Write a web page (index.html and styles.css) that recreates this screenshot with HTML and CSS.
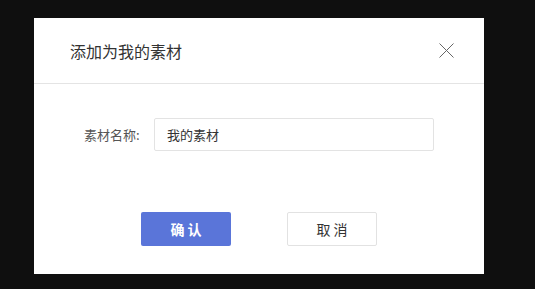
FILE: index.html
```html
<!DOCTYPE html>
<html>
<head>
<title>添加为我的素材</title>
<meta charset="utf-8"/>
<link rel="stylesheet" href="styles.css">
</head>
<body>
<div class="dialog">
<div class="dialog-head">
<div class="title">添加为我的素材</div>
<div class="close" title="关闭">
<svg width="15" height="15" viewBox="0 0 15 15"><path d="M0.5 0.5L14.5 14.5M14.5 0.5L0.5 14.5" stroke="#666" stroke-width="1" fill="none"/></svg>
</div>
</div>
<div class="dialog-body">
<label class="field">
<span>素材名称:</span>
<input type="text" value="我的素材"/>
</label>
<div class="btn-ctn">
<div class="btn ok">确 认</div>
<div class="btn cancel">取 消</div>
</div>
</div>
</div>
</body>
</html>
```
FILE: styles.css
```css
body {
margin: 0;
padding: 18px 0 0 34px;
background-color: #0f0f0f;
}
* {
font-family: "Microsoft YaHei", "Noto Sans CJK SC", sans-serif;
box-sizing: border-box;
}
.dialog {
width: 450px;
height: 256px;
background-color: white;
}
.dialog-head {
height: 66px;
display: flex;
align-items: center;
justify-content: space-between;
padding: 0 30px 0 36px;
border-bottom: 1px solid #e4e4e4;
}
.title {
font-size: 16px;
line-height: 20px;
color: #333;
}
.close {
display: flex;
cursor: pointer;
}
.dialog-body {
padding: 34px 0 0 50px;
}
.field {
display: flex;
align-items: center;
}
.field span {
font-size: 13px;
color: #555;
width: 70px;
}
.field input {
width: 280px;
height: 33px;
border: 1px solid #e3e3e3;
border-radius: 2px;
outline: 0;
padding: 0 12px;
font-size: 13px;
color: #333;
}
.btn-ctn {
display: flex;
gap: 56px;
padding: 61px 0 0 57px;
}
.btn {
width: 90px;
height: 34px;
display: flex;
align-items: center;
justify-content: center;
font-size: 14px;
border-radius: 2px;
cursor: pointer;
}
.ok {
background-color: #5a75d9;
color: white;
font-weight: bold;
}
.cancel {
border: 1px solid #e2e2e2;
color: #333;
}
```
